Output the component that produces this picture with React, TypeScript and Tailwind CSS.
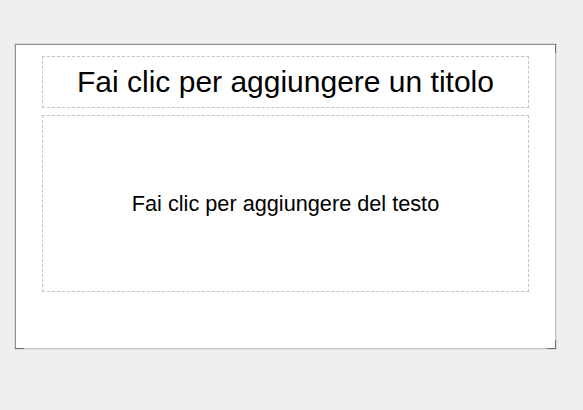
import React from 'react';

const font = { fontFamily: '"Liberation Sans", Arial, sans-serif' };

const App: React.FC = () => {
  return (
    <div className="w-[583px] h-[410px] bg-[#efefef] pt-[43px] pl-[14px]" style={font}>
      {/* slide with thin outer halo */}
      <div className="w-[543px] h-[307px] border border-[#dcdcdc]">
        <div className="relative w-[541px] h-[305px] bg-white border-t border-l border-[#8f8f8f] border-r border-b border-r-[#c6c6c6] border-b-[#c6c6c6]">
          {/* corner marks */}
          <span className="absolute -top-px -right-px w-px h-[9px] bg-[#6e6e6e]" />
          <span className="absolute -bottom-px -left-px w-[9px] h-px bg-[#6e6e6e]" />
          <span className="absolute -bottom-px -right-px w-px h-[9px] bg-[#6e6e6e]" />
          <span className="absolute -bottom-px -right-px w-[9px] h-px bg-[#6e6e6e]" />

          <div className="pt-[11px] pl-[26px] flex flex-col gap-[7px]">
            <div className="w-[487px] h-[52px] border border-dashed border-[#c3c3c3] flex items-center justify-center">
              <span className="text-[30px] leading-none text-black">Fai clic per aggiungere un titolo</span>
            </div>
            <div className="w-[487px] h-[177px] border border-dashed border-[#c3c3c3] flex items-center justify-center">
              <span className="text-[21.7px] leading-none text-black">Fai clic per aggiungere del testo</span>
            </div>
          </div>
        </div>
      </div>
    </div>
  );
};

export default App;
